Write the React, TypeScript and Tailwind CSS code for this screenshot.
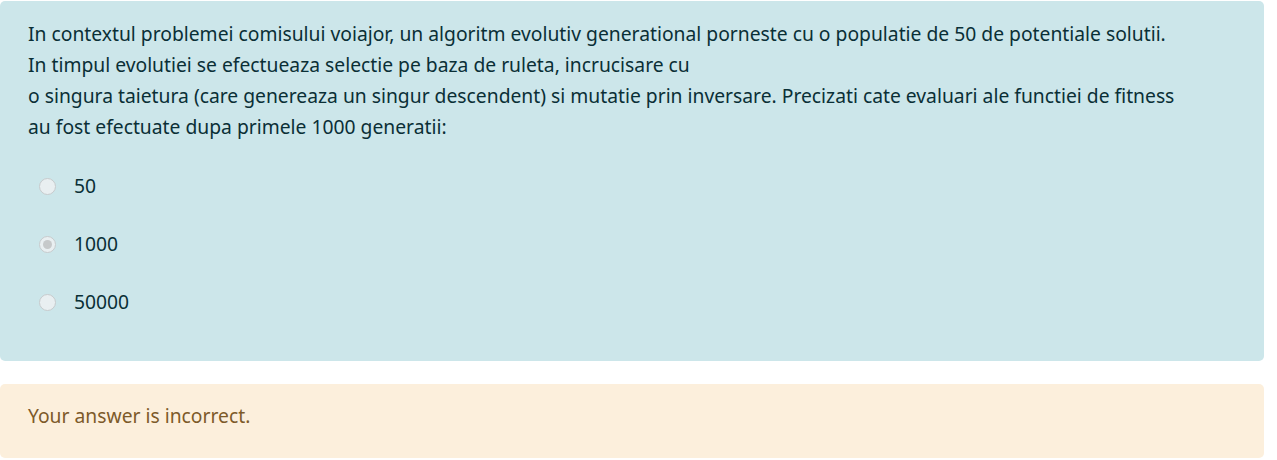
import React from 'react';

const options = [
  { id: 'a', label: '50', checked: false },
  { id: 'b', label: '1000', checked: true },
  { id: 'c', label: '50000', checked: false },
];

const Radio: React.FC<{ checked: boolean }> = ({ checked }) => (
  <span className="flex h-[17px] w-[17px] shrink-0 items-center justify-center rounded-full border border-[#c7cbcd] bg-[#e9eff1]">
    {checked && <span className="h-[9px] w-[9px] rounded-full bg-[#c6c9ca]" />}
  </span>
);

export default function App() {
  return (
    <div className="min-h-screen bg-white pt-px pr-[13px] font-['Noto_Sans',sans-serif]">
      {/* Question */}
      <div className="rounded-[5px] bg-[#cce6ea] pl-[28px] pr-4 pt-[17px] pb-[30px] text-[#0a2f36]">
        <p className="text-[19.3px] leading-[31px]">
          In contextul problemei comisului voiajor, un algoritm evolutiv generational porneste cu o populatie de 50 de potentiale solutii.
          <br />
          In timpul evolutiei se efectueaza selectie pe baza de ruleta, incrucisare cu
          <br />
          o singura taietura (care genereaza un singur descendent) si mutatie prin inversare. Precizati cate evaluari ale functiei de fitness
          <br />
          au fost efectuate dupa primele 1000 generatii:
        </p>

        <div className="mt-[15px] flex flex-col">
          {options.map((o) => (
            <label key={o.id} className="flex h-[58px] items-center gap-[18px] pl-[11px] text-[19.3px]">
              <Radio checked={o.checked} />
              <span>{o.label}</span>
            </label>
          ))}
        </div>
      </div>

      {/* Feedback */}
      <div className="mt-[23px] h-[74px] rounded-[5px] bg-[#fcefdc] pl-[28px] pt-[17px] text-[19.3px] leading-[30px] text-[#7d5a29]">
        Your answer is incorrect.
      </div>
    </div>
  );
}
